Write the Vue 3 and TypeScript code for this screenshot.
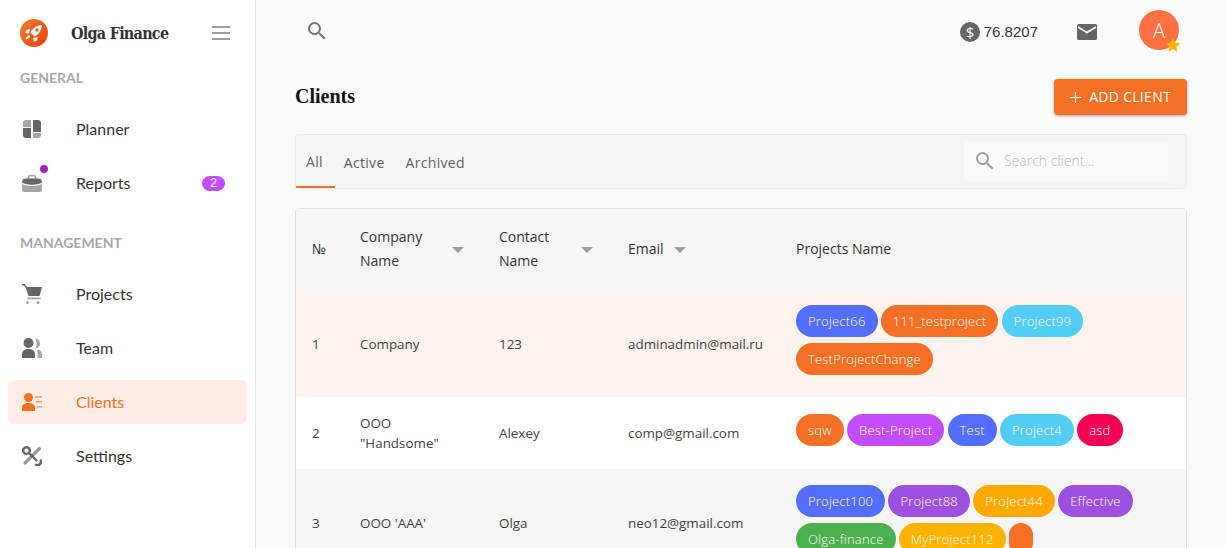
<script setup lang="ts">
type Chip = { label: string; color: string };
type Row = { id: number; company: string; contact: string; email: string; tone: string; chips: Chip[] };

const blue = "#536dfe";
const orange = "#f57025";
const cyan = "#54cdf5";
const pink = "#c44dfb";
const red = "#f50057";
const violet = "#9c50e0";
const amber = "#ffa800";
const green = "#4caf50";
const gold = "#ffb300";

const searchPath =
  "M15.5 14h-.79l-.28-.27A6.471 6.471 0 0 0 16 9.5 6.5 6.5 0 1 0 9.5 16c1.61 0 3.09-.59 4.23-1.57l.27.28v.79l5 4.99L20.49 19l-4.99-5zm-6 0C7.01 14 5 11.99 5 9.5S7.01 5 9.5 5 14 7.01 14 9.5 11.99 14 9.5 14z";

const rows: Row[] = [
  {
    id: 1,
    company: "Company",
    contact: "123",
    email: "adminadmin@mail.ru",
    tone: "warm",
    chips: [
      { label: "Project66", color: blue },
      { label: "111_testproject", color: orange },
      { label: "Project99", color: cyan },
      { label: "TestProjectChange", color: orange },
    ],
  },
  {
    id: 2,
    company: 'OOO "Handsome"',
    contact: "Alexey",
    email: "comp@gmail.com",
    tone: "plain",
    chips: [
      { label: "sqw", color: orange },
      { label: "Best-Project", color: pink },
      { label: "Test", color: blue },
      { label: "Project4", color: cyan },
      { label: "asd", color: red },
    ],
  },
  {
    id: 3,
    company: "OOO 'AAA'",
    contact: "Olga",
    email: "neo12@gmail.com",
    tone: "grey",
    chips: [
      { label: "Project100", color: blue },
      { label: "Project88", color: violet },
      { label: "Project44", color: amber },
      { label: "Effective", color: violet },
      { label: "Olga-finance", color: green },
      { label: "MyProject112", color: gold },
      { label: "", color: orange },
    ],
  },
];
</script>

<template>
  <div class="page">
    <aside class="sidebar">
      <div class="brand">
        <svg class="logo" viewBox="0 0 28 28">
          <defs>
            <linearGradient id="logoFill" x1="0" y1="0" x2="1" y2="1">
              <stop offset="0" stop-color="#f9792a" />
              <stop offset="1" stop-color="#e4430f" />
            </linearGradient>
          </defs>
          <circle cx="14" cy="14" r="14" fill="url(#logoFill)" />
          <path fill="#fff" d="M22 6C16.5 6.500 12.500 9.500 10.500 13.500L14.500 17.500C18.500 15.500 21.500 11.500 22 6z" />
          <circle cx="17" cy="11" r="1.700" fill="#f1621f" />
          <path fill="#fff" d="M10 9.800 6.500 11 5 14l4 .5zM18 18l-1.200 3.500-3 1.500-.5-4z" />
          <path fill="#fff" d="M9.300 16.300C7.300 16.800 6 18 5.500 20.500 8 20 9.500 19 10.300 17.300z" />
        </svg>
        <span class="brand-name">Olga Finance</span>
        <span class="burger"><i></i><i></i><i></i></span>
      </div>

      <div class="section first">GENERAL</div>
      <nav class="nav">
        <a class="item">
          <svg class="ico" viewBox="0 0 20 20">
            <path fill="#a6a6a6" d="M9 1H4a3 3 0 0 0-3 3v4h8V1z" />
            <path fill="#666" d="M1 9h8v10H4a3 3 0 0 1-3-3V9z" />
            <path fill="#666" d="M11 1h5a3 3 0 0 1 3 3v9h-8V1z" />
            <path fill="#a6a6a6" d="M11 14h8v2a3 3 0 0 1-3 3h-5v-5z" />
          </svg>
          <span class="label">Planner</span>
        </a>
        <a class="item">
          <span class="ico-wrap">
            <svg class="ico" viewBox="0 0 20 20">
              <path fill="none" stroke="#a6a6a6" stroke-width="1.600" d="M6.500 6V4.500a2 2 0 0 1 2-2h3a2 2 0 0 1 2 2V6" />
              <path fill="#666" d="M0 9c0-2 1.500-3.500 4-3.500h12c2.500 0 4 1.500 4 3.500v.5c-2.500 1.500-6 2.200-10 2.200S2.500 11 0 9.500V9z" />
              <path fill="#a6a6a6" d="M0 11c2.500 1.300 6 2 10 2s7.500-.7 10-2v5.500a2.500 2.500 0 0 1-2.500 2.500h-15A2.500 2.500 0 0 1 0 16.500V11z" />
            </svg>
            <i class="dot"></i>
          </span>
          <span class="label">Reports</span>
          <b class="count">2</b>
        </a>
      </nav>

      <div class="section second">MANAGEMENT</div>
      <nav class="nav">
        <a class="item">
          <svg class="ico" viewBox="0 0 20 20">
            <path fill="#666" d="M0 0h2.800l2 3H20l-2.500 9H6.500L3.800 4 1.800 1.500H0z" />
            <path fill="#a6a6a6" d="M5.500 13.500h13.200v1.700H5z" />
            <circle cx="5.500" cy="18.500" r="1.500" fill="#a6a6a6" />
            <circle cx="16" cy="18.500" r="1.500" fill="#a6a6a6" />
          </svg>
          <span class="label">Projects</span>
        </a>
        <a class="item">
          <svg class="ico" viewBox="0 0 20 20">
            <path fill="#a6a6a6" d="M13 .5a5 5 0 0 1 0 10c1-1.300 1.600-3 1.600-5S14 1.800 13 .5zM15 11.500c3 .5 5 2 5 4.500v4h-4.500v-4c0-1.800-.2-3-.5-4.500z" />
            <circle cx="6.500" cy="5" r="5" fill="#666" />
            <path fill="#666" d="M0 20v-4c0-3 2.800-5 6.500-5s6.500 2 6.500 5v4z" />
          </svg>
          <span class="label">Team</span>
        </a>
        <a class="item active">
          <svg class="ico" viewBox="0 0 20 20">
            <circle cx="6.500" cy="5.500" r="4.500" fill="#f57025" />
            <path fill="#f57025" d="M0 19v-3.500C0 12.500 3 11 6.500 11s6.500 1.500 6.500 4.500V19z" />
            <path fill="#f9a77c" d="M13 4h7v1.800h-7zM14 9h6v1.800h-6zM15 14h5v1.800h-5z" />
          </svg>
          <span class="label">Clients</span>
        </a>
        <a class="item">
          <svg class="ico" viewBox="0 0 20 20">
            <path fill="none" stroke="#999" stroke-width="3.200" stroke-linecap="round" d="M17.500 2.500 3 17" />
            <path fill="none" stroke="#666" stroke-width="2.400" d="M4.500 1.300a3.300 3.300 0 1 0 .01 0zM7 7l8 8" />
            <path fill="none" stroke="#666" stroke-width="2.400" stroke-linecap="round" d="M18.800 14.500a3.500 3.500 0 0 1-4.800 4.300" />
          </svg>
          <span class="label">Settings</span>
        </a>
      </nav>
    </aside>

    <main class="main">
      <header class="topbar">
        <svg class="top-search" viewBox="0 0 24 24">
          <path fill="#757575" :d="searchPath" />
        </svg>
        <div class="balance">
          <svg class="coin" viewBox="0 0 20 20">
            <circle cx="10" cy="10" r="10" fill="#666" />
            <text x="10" y="15.500" text-anchor="middle" class="coin-sign">$</text>
          </svg>
          <span>76.8207</span>
        </div>
        <svg class="mail" viewBox="0 0 20 16">
          <rect width="20" height="16" rx="1.500" fill="#666" />
          <path fill="none" stroke="#fff" stroke-width="1.600" d="M1 3l9 5.500L19 3" />
        </svg>
        <div class="avatar">
          A
          <svg class="star" viewBox="0 0 24 24">
            <path fill="#ffb300" d="M12 1.500l3.200 7.100 7.800.8-5.800 5.200 1.600 7.700L12 18.400l-6.800 3.900 1.600-7.700L1 9.400l7.800-.8z" />
          </svg>
        </div>
      </header>

      <div class="content">
        <div class="title-row">
          <h1>Clients</h1>
          <button class="add">
            <svg class="plus" viewBox="0 0 12 12">
              <path fill="none" stroke="#fff" stroke-width="1.300" d="M6 0v12M0 6h12" />
            </svg>
            ADD CLIENT
          </button>
        </div>

        <div class="tabs">
          <a class="tab on">All</a>
          <a class="tab">Active</a>
          <a class="tab">Archived</a>
          <label class="search">
            <svg class="search-ico" viewBox="0 0 24 24">
              <path fill="#9e9e9e" :d="searchPath" />
            </svg>
            <input placeholder="Search client..." />
          </label>
        </div>

        <div class="table-box">
          <table>
            <colgroup>
              <col style="width: 48px" />
              <col style="width: 139px" />
              <col style="width: 129px" />
              <col style="width: 168px" />
              <col />
            </colgroup>
            <thead>
              <tr>
                <th>№</th>
                <th>
                  <div class="th wide"><span>Company<br />Name</span><i class="sort"></i></div>
                </th>
                <th>
                  <div class="th wide"><span>Contact<br />Name</span><i class="sort"></i></div>
                </th>
                <th>
                  <div class="th"><span>Email</span><i class="sort"></i></div>
                </th>
                <th>Projects Name</th>
              </tr>
            </thead>
            <tbody>
              <tr v-for="row in rows" :key="row.id" :class="row.tone">
                <td>{{ row.id }}</td>
                <td class="company">{{ row.company }}</td>
                <td>{{ row.contact }}</td>
                <td>{{ row.email }}</td>
                <td>
                  <div class="chips">
                    <span
                      v-for="chip in row.chips"
                      :key="chip.label"
                      class="chip"
                      :style="{ background: chip.color }"
                      >{{ chip.label }}</span
                    >
                  </div>
                </td>
              </tr>
            </tbody>
          </table>
        </div>
      </div>
    </main>
  </div>
</template>

<style>
html,
body {
  height: 100%;
  overflow: hidden;
}
</style>

<style scoped>
.page {
  display: flex;
  height: 100vh;
  overflow: hidden;
  background: #fafafa;
  font-family: "Open Sans", "Noto Sans", sans-serif;
  color: #424242;
}

.sidebar {
  flex: 0 0 256px;
  box-sizing: border-box;
  background: #fff;
  border-right: 1px solid #e4e4e4;
  font-family: Lato, sans-serif;
}

.brand {
  display: flex;
  align-items: center;
  height: 66px;
  padding: 0 25px 0 20px;
}

.logo {
  width: 28px;
  height: 28px;
}

.brand-name {
  margin-left: 23px;
  font-family: "DejaVu Serif", serif;
  font-size: 16px;
  font-stretch: condensed;
  font-weight: 700;
  letter-spacing: -0.75px;
  color: #333;
}

.burger {
  display: flex;
  flex-direction: column;
  gap: 4px;
  margin-left: auto;
}

.burger i {
  display: block;
  width: 18px;
  height: 2px;
  background: #9e9e9e;
}

.section {
  padding-left: 20px;
  font-size: 14px;
  font-weight: 700;
  line-height: 24px;
  color: #a8a8a8;
}

.section.second {
  margin-top: 26px;
}

.nav {
  display: flex;
  flex-direction: column;
  gap: 10px;
  margin: 17px 8px 0;
}

.item {
  display: flex;
  align-items: center;
  height: 44px;
  padding: 0 22px 0 14px;
  border-radius: 6px;
  font-size: 16px;
  color: #333;
}

.label {
  padding-bottom: 2px;
}

.item.active {
  background: #ffede5;
  color: #f57025;
}

.ico {
  display: block;
  flex: none;
  width: 20px;
  height: 20px;
  margin-right: 34px;
}

.ico-wrap {
  position: relative;
  flex: none;
}

.dot {
  position: absolute;
  top: -8px;
  left: 18px;
  width: 8px;
  height: 8px;
  border-radius: 50%;
  background: #9c27b0;
}

.count {
  display: flex;
  align-items: center;
  justify-content: center;
  width: 23px;
  height: 15px;
  margin-left: auto;
  border-radius: 8px;
  background: #c44dfb;
  font-family: "Liberation Sans", sans-serif;
  font-size: 12px;
  font-weight: 400;
  color: #fff;
}

.main {
  flex: 1;
  min-width: 0;
}

.topbar {
  display: flex;
  align-items: center;
  height: 62px;
  padding: 0 47px 0 49px;
}

.top-search {
  width: 24px;
  height: 24px;
}

.balance {
  display: flex;
  align-items: center;
  gap: 4px;
  margin-left: auto;
  font-family: "Liberation Sans", sans-serif;
  font-size: 15px;
  color: #333;
}

.coin {
  width: 20px;
  height: 20px;
  margin-top: 2px;
}

.coin-sign {
  font-family: "Open Sans", sans-serif;
  font-size: 15px;
  fill: #fff;
}

.mail {
  width: 20px;
  height: 16px;
  margin-left: 39px;
  margin-top: 2px;
}

.avatar {
  position: relative;
  display: flex;
  align-items: center;
  justify-content: center;
  width: 40px;
  height: 40px;
  margin-left: 42px;
  margin-top: -2px;
  border-radius: 50%;
  background: #ff7043;
  font-size: 20px;
  font-weight: 300;
  color: #fff;
}

.star {
  position: absolute;
  right: -2px;
  bottom: -3px;
  width: 16px;
  height: 16px;
}

.content {
  padding: 0 39px;
}

.title-row {
  display: flex;
  align-items: center;
  justify-content: space-between;
  margin-top: 17px;
}

h1 {
  margin: 0;
  padding-bottom: 2px;
  font-family: "Liberation Serif", serif;
  font-size: 20px;
  font-weight: 700;
  color: #111;
}

.add {
  display: flex;
  align-items: center;
  gap: 8px;
  height: 36px;
  padding: 0 16px 2px;
  border: none;
  border-radius: 4px;
  background: #f57025;
  box-shadow: 0 1px 3px rgba(0, 0, 0, 0.35);
  font-family: inherit;
  font-size: 14px;
  letter-spacing: 0.3px;
  color: #fff;
}

.plus {
  width: 11px;
  height: 11px;
  margin-top: 2px;
}

.tabs {
  display: flex;
  align-items: center;
  height: 55px;
  box-sizing: border-box;
  margin-top: 19px;
  border: 1px solid #ececec;
  border-radius: 4px;
  background: #f5f5f5;
  font-size: 14px;
  letter-spacing: 0.3px;
}

.tab {
  display: flex;
  align-items: center;
  height: 100%;
  box-sizing: border-box;
  padding: 2px 12px 0 9px;
  color: #616161;
}

.tab.on {
  padding-left: 10px;
  border-bottom: 2px solid #f57025;
}

.search {
  display: flex;
  align-items: center;
  box-sizing: border-box;
  width: 204px;
  height: 40px;
  margin: -2px 18px 0 auto;
  padding-left: 9px;
  border-radius: 4px;
  background: #fafafa;
}

.search-ico {
  flex: none;
  width: 24px;
  height: 24px;
}

.search input {
  flex: 1;
  min-width: 0;
  margin-left: 5px;
  border: none;
  outline: none;
  background: transparent;
  font-family: inherit;
  font-size: 14px;
  font-weight: 300;
}

.search input::placeholder {
  color: #bdbdbd;
}

.table-box {
  margin-top: 19px;
  border: 1px solid #e0e0e0;
  border-radius: 4px;
  overflow: hidden;
}

table {
  width: 100%;
  table-layout: fixed;
  border-collapse: collapse;
  font-size: 13.4px;
}

thead tr {
  height: 82px;
  background: #f5f5f5;
}

th {
  padding: 0 16px 2px;
  font-size: 14px;
  font-weight: 500;
  line-height: 24px;
  text-align: left;
  color: #333;
}

.th {
  display: flex;
  align-items: center;
}

.th.wide {
  justify-content: space-between;
}

.sort {
  position: relative;
  flex: none;
  width: 18px;
  height: 18px;
  margin-left: 7px;
}

.sort::after {
  content: "";
  position: absolute;
  left: 3px;
  top: 7px;
  border-left: 6px solid transparent;
  border-right: 6px solid transparent;
  border-top: 6px solid #9e9e9e;
}

td {
  padding: 0 16px;
  line-height: 20px;
  color: #424242;
}

tr.warm {
  background: #fdf3ee;
}

tr.plain {
  background: #fff;
}

tr.grey {
  background: #f5f5f5;
}

.chips {
  display: flex;
  flex-wrap: wrap;
  gap: 6px 3.300px;
}

.warm .chips {
  margin: 14px 0 22px;
}

.plain .chips {
  margin: 17px 0 23px;
}

.grey .chips {
  margin: 16px 0 22px;
}

.chip {
  display: inline-flex;
  align-items: center;
  box-sizing: border-box;
  min-width: 24px;
  height: 32px;
  padding: 0 12px;
  border-radius: 16px;
  font-size: 13px;
  font-weight: 300;
  letter-spacing: 0.2px;
  color: #fff;
}
</style>
